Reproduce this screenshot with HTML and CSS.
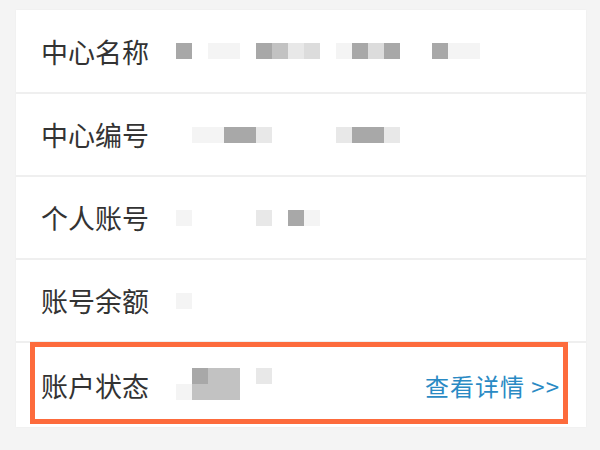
FILE: index.html
```html
<!DOCTYPE html>
<html lang="zh-CN">

<head>
    <meta charset="UTF-8">
    <meta name="viewport" content="width=device-width, initial-scale=1.0">
    <title>账户信息</title>
    <link rel="stylesheet" href="styles.css">
</head>

<body>
    <main class="page">
        <ul class="info-list">
            <li class="info-row">
                <span class="info-label">中心名称</span>
                <span class="info-value mosaic">
                    <i class="px px-a"></i><i class="px"></i><i class="px px-e"></i><i class="px px-e"></i><i class="px"></i><i class="px px-a"></i><i class="px px-b"></i><i class="px px-d"></i><i class="px px-c"></i><i class="px"></i><i class="px px-e"></i><i class="px px-a"></i><i class="px px-c"></i><i class="px px-a"></i><i class="px"></i><i class="px"></i><i class="px px-a"></i><i class="px px-e"></i><i class="px px-e"></i>
                </span>
            </li>
            <li class="info-row">
                <span class="info-label">中心编号</span>
                <span class="info-value mosaic">
                    <i class="px"></i><i class="px px-e"></i><i class="px px-e"></i><i class="px px-a"></i><i class="px px-a"></i><i class="px px-d"></i><i class="px"></i><i class="px"></i><i class="px"></i><i class="px"></i><i class="px px-d"></i><i class="px px-a"></i><i class="px px-a"></i><i class="px px-d"></i>
                </span>
            </li>
            <li class="info-row">
                <span class="info-label">个人账号</span>
                <span class="info-value mosaic">
                    <i class="px px-e"></i><i class="px"></i><i class="px"></i><i class="px"></i><i class="px"></i><i class="px px-d"></i><i class="px"></i><i class="px px-a"></i><i class="px px-e"></i>
                </span>
            </li>
            <li class="info-row">
                <span class="info-label">账号余额</span>
                <span class="info-value mosaic">
                    <i class="px px-e"></i>
                </span>
            </li>
            <li class="info-row highlight">
                <span class="info-label">账户状态</span>
                <span class="info-value mosaic two-line">
                    <span class="mosaic-line"><i class="px"></i><i class="px px-a"></i><i class="px px-b"></i><i class="px px-b"></i><i class="px"></i><i class="px px-d"></i></span>
                    <span class="mosaic-line"><i class="px px-e"></i><i class="px px-b"></i><i class="px px-b"></i><i class="px px-b"></i></span>
                </span>
                <a class="info-link" href="#">查看详情 &gt;&gt;</a>
            </li>
        </ul>
    </main>
</body>

</html>
```

FILE: styles.css
```css
body,
body * {
    padding: 0;
    margin: 0;
    box-sizing: border-box;
    font-family: 'Noto Sans CJK SC', 'Noto Sans', sans-serif;
}

body {
    background-color: #f4f4f4;
    width: 600px;
    height: 450px;
    overflow: hidden;
}

body ul {
    list-style: none;
}

.page {
    padding: 10px 14px 0 16px;
}

.info-list {
    background-color: #fff;
    box-shadow: 0 0 2px rgba(0, 0, 0, 0.04);
}

.info-row {
    position: relative;
    display: flex;
    align-items: center;
    height: 83px;
    padding: 0 27px 0 25px;
    border-bottom: 2px solid #efefef;
}

.info-row:first-child {
    height: 84px;
}

.info-row:last-child {
    height: 84px;
    border-bottom: none;
}

.info-label {
    width: 135px;
    flex-shrink: 0;
    font-size: 27px;
    color: #333;
    line-height: 1;
}

/* blurred values */
.mosaic {
    display: flex;
    height: 16px;
}

.mosaic.two-line {
    flex-direction: column;
    height: 32px;
    margin-top: -2px;
}

.mosaic-line {
    display: flex;
}

.px {
    display: block;
    width: 16px;
    height: 16px;
}

.px-a {
    background-color: #a8a8a8;
}

.px-b {
    background-color: #c2c2c2;
}

.px-c {
    background-color: #dcdcdc;
}

.px-d {
    background-color: #e8e8e8;
}

.px-e {
    background-color: #f4f4f4;
}

.info-link {
    margin-left: auto;
    font-size: 24px;
    color: #2a8ac4;
    text-decoration: none;
    letter-spacing: 1px;
    margin-right: -1px;
}

/* annotation frame */
.info-row.highlight::after {
    content: "";
    position: absolute;
    left: 14px;
    right: 18px;
    top: -1px;
    bottom: 3px;
    border: 5px solid #fd6b3c;
}
```
